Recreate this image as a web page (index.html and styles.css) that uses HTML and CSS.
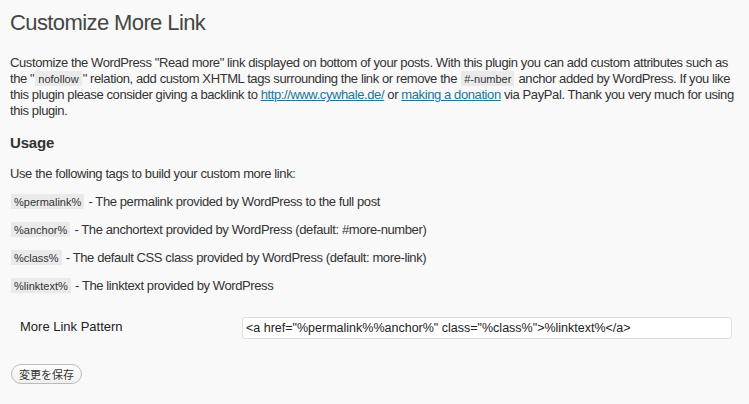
FILE: index.html
```html
<!DOCTYPE html>
<html lang="ja">
<head>
  <meta charset="UTF-8" />
  <title>Customize More Link</title>
  <link rel="stylesheet" href="styles.css">
</head>
<body>
  <div class="wrap">
    <h2>Customize More Link</h2>

    <p>Customize the WordPress "Read more" link displayed on bottom of your posts. With this plugin you can add custom attributes such as the "<code>nofollow</code>" relation, add custom XHTML tags surrounding the link or remove the <code>#-number</code> anchor added by WordPress. If you like this plugin please consider giving a backlink to <a href="#">http://www.cywhale.de/</a> or <a href="#">making a donation</a> via PayPal. Thank you very much for using this plugin.</p>

    <h3>Usage</h3>
    <p>Use the following tags to build your custom more link:</p>
    <p><code>%permalink%</code> - The permalink provided by WordPress to the full post</p>
    <p><code>%anchor%</code> - The anchortext provided by WordPress (default: #more-number)</p>
    <p><code>%class%</code> - The default CSS class provided by WordPress (default: more-link)</p>
    <p><code>%linktext%</code> - The linktext provided by WordPress</p>

    <table class="form-table">
      <tr>
        <th><label for="pattern">More Link Pattern</label></th>
        <td><input type="text" id="pattern" value="&lt;a href=&quot;%permalink%%anchor%&quot; class=&quot;%class%&quot;&gt;%linktext%&lt;/a&gt;" /></td>
      </tr>
    </table>

    <div class="submit">
      <button type="submit">変更を保存</button>
    </div>
  </div>
</body>
</html>
```

FILE: styles.css
```css
body {
  margin: 0;
  background-color: #f9f9f9;
  font-family: "Liberation Sans", Arial, sans-serif;
  font-size: 13px;
  line-height: 16px;
  color: #333;
}
.wrap {
  padding: 0 7px 0 10px;
}
h2 {
  margin: 0 0 14px;
  padding: 8px 0 4px;
  font-size: 22px;
  line-height: 29px;
  font-weight: normal;
  letter-spacing: -0.6px;
  color: #464646;
}
h3 {
  margin: 15px 0 14px;
  font-size: 15px;
  line-height: 18px;
  font-weight: bold;
  letter-spacing: -0.2px;
  color: #333;
}
p {
  margin: 0 0 12px;
  letter-spacing: -0.4px;
}
a {
  color: #21759b;
}
code {
  font-family: "Liberation Sans", Arial, sans-serif;
  font-size: 11px;
  letter-spacing: 0;
  background-color: #eaeaea;
  padding: 2px 3px 1px;
  margin: 0 1px;
  color: #333;
}
.form-table {
  width: 100%;
  margin-top: 15px;
  border-collapse: collapse;
  border-spacing: 0;
}
.form-table th {
  width: 200px;
  padding: 10px;
  text-align: left;
  vertical-align: top;
  font-weight: normal;
  color: #222;
}
.form-table td {
  padding: 8px 10px 8px 12px;
  vertical-align: top;
}
.form-table input {
  display: block;
  width: 100%;
  box-sizing: border-box;
  height: 22px;
  margin: 0;
  padding: 0 3px;
  border: 1px solid #dfdfdf;
  border-radius: 3px;
  background-color: #fff;
  font-family: "Liberation Sans", Arial, sans-serif;
  font-size: 12.5px;
  color: #222;
}
.submit {
  margin-top: 17px;
  padding-left: 1px;
}
.submit button {
  height: 20px;
  padding: 0 7px;
  border: 1px solid #bbb;
  border-radius: 11px;
  background: linear-gradient(#fefefe, #f0f0f0);
  font-family: "Noto Sans CJK JP", sans-serif;
  font-size: 11px;
  line-height: 18px;
  color: #333;
}
```
